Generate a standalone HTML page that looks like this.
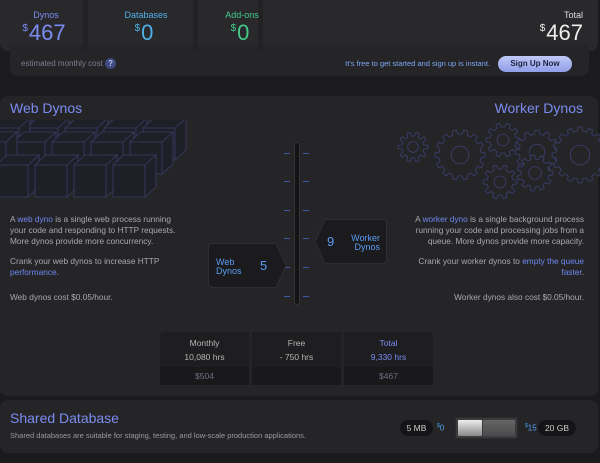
<!DOCTYPE html>
<html><head><meta charset="utf-8"><style>
*{margin:0;padding:0;box-sizing:border-box}
body{width:600px;height:463px;background:#1b1b1d;font-family:"Liberation Sans",sans-serif;position:relative;overflow:hidden;color:#aaa}
.a{position:absolute}
.top{left:0;top:0;width:598px;height:51px;background:#29292c;border-radius:0 0 8px 8px}
.sub{left:10px;top:45px;width:579px;height:31px;background:#252528;border-radius:0 0 8px 8px}
.sep{top:0;width:5px;height:51px;background:#222224}
.lbl{font-size:9px;text-align:center;width:80px}
.big{font-size:22px;text-align:center;width:80px}
.big sup{font-size:10px;vertical-align:9px;margin-right:1px}
.panel{left:0;top:96px;width:598px;height:300px;background:#252528;border-radius:8px}
.panel2{left:0;top:400px;width:598px;height:53px;background:#252528;border-radius:8px}
.h{font-size:14px;color:#7b8cf0;letter-spacing:0}
.t{font-size:8.3px;line-height:11px;color:#a9a9ab}
.t b{font-weight:normal;color:#6f87f0}
.bub{color:#5a9cf5;font-size:9px;line-height:9px}
.tk{width:6px;height:1px;background:#3d5aa8}
.cell{top:332px;width:89px;height:53px;background:#1e1e20;text-align:center;font-size:8.5px;color:#b5b5b5}
.cell .lo{position:absolute;left:0;bottom:0;width:100%;height:18px;background:#19191b;line-height:18px;color:#6a7080}
.pill{background:#151517;border-radius:8px;font-size:8.5px;color:#ccc;text-align:center;line-height:16px;height:16px}
</style></head><body>
<div class="a top"></div>
<div class="a sub"></div>
<div class="a top" style="background:transparent"></div>
<div class="a sep" style="left:83px"></div>
<div class="a sep" style="left:193px"></div>
<div class="a sep" style="left:258px"></div>
<div class="a lbl" style="left:6px;top:10px;color:#7b8cf0">Dynos</div>
<div class="a big" style="left:4px;top:20px;color:#7b8cf0"><sup>$</sup>467</div>
<div class="a lbl" style="left:106px;top:10px;color:#4fb0e8">Databases</div>
<div class="a big" style="left:104px;top:20px;color:#4fb0e8"><sup>$</sup>0</div>
<div class="a lbl" style="left:202px;top:10px;color:#45c98a">Add-ons</div>
<div class="a big" style="left:200px;top:20px;color:#45c98a"><sup>$</sup>0</div>
<div class="a lbl" style="left:503px;top:10px;color:#ddd;text-align:right">Total</div>
<div class="a big" style="left:503px;top:20px;color:#eee;text-align:right"><sup>$</sup>467</div>
<div class="a" style="left:21px;top:58px;font-size:8px;color:#7a7f8e">estimated monthly cost <span style="display:inline-block;width:11px;height:11px;border-radius:6px;background:#3e4a80;color:#b8c2f0;text-align:center;font-size:8px;line-height:11px;font-weight:bold">?</span></div>
<div class="a" style="left:340px;top:59px;font-size:7.5px;color:#7fa7f5;width:150px;text-align:right">It's free to get started and sign up is instant.</div>
<div class="a" style="left:498px;top:56px;width:74px;height:16px;border-radius:8px;background:linear-gradient(#c0c8f8,#8f9ee8);color:#1e2440;font-size:8px;font-weight:bold;text-align:center;line-height:16px">Sign Up Now</div>

<div class="a panel"></div>
<div class="a h" style="left:10px;top:100px">Web Dynos</div>
<div class="a h" style="right:17px;top:100px">Worker Dynos</div>

<svg class="a" style="left:0;top:120px" width="210" height="85" fill="#1f1f27" stroke="#3a3d66" stroke-width="0.8">
<g id="c"><path d="M0 0h32v32H0z M0 0l11-10h32L32 0z M32 0l11-10v32L32 32z"/></g>
<use href="#c" x="26" y="8"/><use href="#c" x="65" y="8"/><use href="#c" x="104" y="8"/><use href="#c" x="143" y="8"/><use href="#c" x="-13" y="8"/>
<use href="#c" x="13" y="22"/><use href="#c" x="52" y="22"/><use href="#c" x="91" y="22"/><use href="#c" x="130" y="22"/><use href="#c" x="-26" y="22"/>
<use href="#c" x="-4" y="45"/><use href="#c" x="35" y="45"/><use href="#c" x="74" y="45"/><use href="#c" x="113" y="45"/>
</svg>

<svg class="a" id="g" style="left:380px;top:115px" width="220" height="90" fill="#252528" stroke="#3a3d6a" stroke-width="0.9"></svg>
<script>
(function(){var s=document.getElementById('g'),G=[[33,32,15,10],[80,40,25,14],[123,25,17,10],[157,37,22,12],[155,58,18,11],[120,67,17,10],[200,40,28,16]],h='';
G.forEach(function(g){var cx=g[0],cy=g[1],R=g[2],n=g[3],r=R-4,d='';for(var i=0;i<n;i++){var a=i*2*Math.PI/n,w=Math.PI/n;var pts=[[r,a-w*0.6],[R,a-w*0.35],[R,a+w*0.35],[r,a+w*0.6],[r,a+w*1.4]];pts.forEach(function(p,k){d+=(i==0&&k==0?'M':'L')+(cx+p[0]*Math.cos(p[1])).toFixed(1)+' '+(cy+p[0]*Math.sin(p[1])).toFixed(1)+' ';});}
h+='<path d="'+d+'Z"/><circle cx="'+cx+'" cy="'+cy+'" r="'+(R*0.35).toFixed(1)+'"/>';});s.innerHTML=h;})();
</script>

<div class="a t" style="left:10px;top:214px;width:172px">A <b>web dyno</b> is a single web process running your code and responding to HTTP requests. More dynos provide more concurrency.</div>
<div class="a t" style="left:10px;top:256px;width:172px">Crank your web dynos to increase HTTP <b>performance</b>.</div>
<div class="a t" style="left:10px;top:292px;width:172px">Web dynos cost $0.05/hour.</div>
<div class="a t" style="right:16px;top:214px;width:172px;text-align:right">A <b>worker dyno</b> is a single background process running your code and processing jobs from a queue. More dynos provide more capacity.</div>
<div class="a t" style="right:16px;top:256px;width:172px;text-align:right">Crank your worker dynos to <b>empty the queue faster</b>.</div>
<div class="a t" style="right:16px;top:292px;width:172px;text-align:right">Worker dynos also cost $0.05/hour.</div>

<div class="a" style="left:294px;top:142px;width:6px;height:163px;background:#141416;border-radius:3px;border:1px solid #333"></div>
<div class="a tk" style="left:284px;top:153px"></div><div class="a tk" style="left:303px;top:153px"></div>
<div class="a tk" style="left:284px;top:181px"></div><div class="a tk" style="left:303px;top:181px"></div>
<div class="a tk" style="left:284px;top:210px"></div><div class="a tk" style="left:303px;top:210px"></div>
<div class="a tk" style="left:284px;top:238px"></div><div class="a tk" style="left:303px;top:238px"></div>
<div class="a tk" style="left:284px;top:267px"></div><div class="a tk" style="left:303px;top:267px"></div>
<div class="a tk" style="left:284px;top:296px"></div><div class="a tk" style="left:303px;top:296px"></div>

<svg class="a" style="left:208px;top:243px" width="78" height="46"><path d="M4 .5h64l10 22-10 22H4a3.5 3.5 0 0 1-3.5-3.5V4A3.5 3.5 0 0 1 4 .5z" fill="#1b1b1d" stroke="#2e2e31"/></svg>
<div class="a bub" style="left:216px;top:258px">Web<br>Dynos</div>
<div class="a" style="left:260px;top:258px;font-size:13px;color:#5a9cf5">5</div>
<svg class="a" style="left:311px;top:219px" width="76" height="46"><path d="M72 .5H14L4 22.5l10 22h58a3.5 3.5 0 0 0 3.5-3.5V4A3.5 3.5 0 0 0 72 .5z" fill="#1b1b1d" stroke="#2e2e31"/></svg>
<div class="a" style="left:327px;top:234px;font-size:13px;color:#5a9cf5">9</div>
<div class="a bub" style="left:340px;top:234px;width:40px;text-align:right">Worker<br>Dynos</div>

<div class="a cell" style="left:160px;border-radius:5px 0 0 5px"><div style="margin-top:6px">Monthly</div><div style="margin-top:4px">10,080 hrs</div><div class="lo">$504</div></div>
<div class="a cell" style="left:252px"><div style="margin-top:6px">Free</div><div style="margin-top:4px">- 750 hrs</div><div class="lo"></div></div>
<div class="a cell" style="left:344px;border-radius:0 5px 5px 0;color:#7b8cf0"><div style="margin-top:6px">Total</div><div style="margin-top:4px">9,330 hrs</div><div class="lo">$467</div></div>

<div class="a panel2"></div>
<div class="a h" style="left:10px;top:410px">Shared Database</div>
<div class="a" style="left:10px;top:431px;font-size:7.5px;color:#9a9a9c">Shared databases are suitable for staging, testing, and low-scale production applications.</div>
<div class="a pill" style="left:400px;top:420px;width:33px">5 MB</div>
<div class="a" style="left:437px;top:423px;font-size:8px;color:#4fa0f0"><sup style="font-size:5px">$</sup>0</div>
<div class="a" style="left:455px;top:417px;width:63px;height:22px;background:#3a3a3d;border:1px solid #2a2a2c;border-radius:2px"><div style="position:absolute;left:2px;top:2px;width:24px;height:16px;background:linear-gradient(#eee,#888);border-radius:1px"></div><div style="position:absolute;left:27px;top:2px;width:32px;height:16px;background:linear-gradient(#666,#4a4a4c)"></div></div>
<div class="a" style="left:525px;top:423px;font-size:8px;color:#4fa0f0"><sup style="font-size:5px">$</sup>15</div>
<div class="a pill" style="left:538px;top:420px;width:38px">20 GB</div>
</body></html>
